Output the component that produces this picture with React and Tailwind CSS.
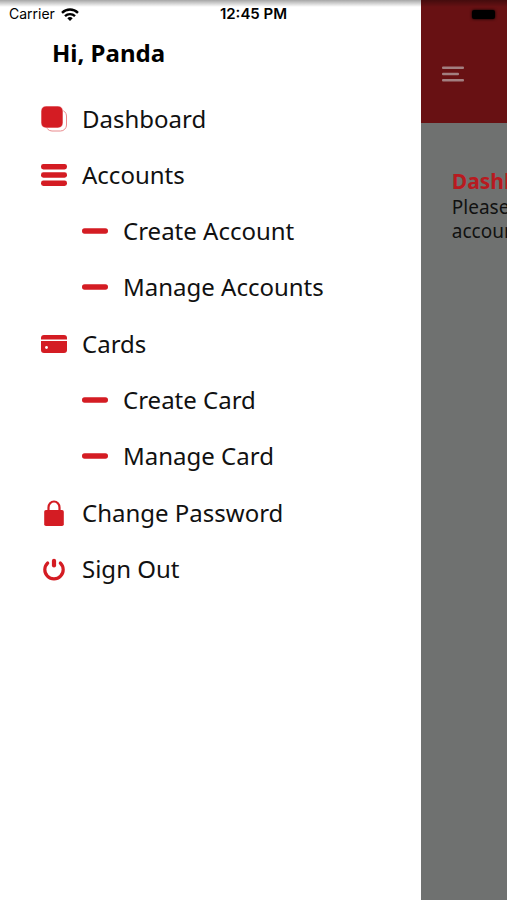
const DashboardIcon = () => (
    <svg viewBox="0 0 26 26" className="h-[26px] w-[26px]" aria-hidden="true">
        <rect x="5" y="4" width="20.5" height="21" rx="6" fill="#fff" stroke="#e98a8d" strokeWidth="1" />
        <rect x="0" y="0" width="22" height="22" rx="5" fill="#d41c23" stroke="#fff" strokeWidth="0.6" />
    </svg>
)

const AccountsIcon = () => (
    <svg viewBox="0 0 26 26" className="h-[26px] w-[26px]" fill="#d41c23" aria-hidden="true">
        <rect x="0" y="2" width="26" height="5.4" rx="2.4" />
        <rect x="0" y="10.3" width="26" height="5.4" rx="2.4" />
        <rect x="0" y="18.6" width="26" height="5.4" rx="2.4" />
    </svg>
)

const DashIcon = () => (
    <svg viewBox="0 0 26 26" className="h-[26px] w-[26px]" fill="#d41c23" aria-hidden="true">
        <rect x="0" y="10.3" width="26" height="5.4" rx="2.6" />
    </svg>
)

const CardIcon = () => (
    <svg viewBox="0 0 26 26" className="h-[26px] w-[26px]" fill="#d41c23" aria-hidden="true">
        <path d="M3 4h20a3 3 0 0 1 3 3v1.500H0V7a3 3 0 0 1 3-3z" />
        <path d="M0 10h26v9a3 3 0 0 1-3 3H3a3 3 0 0 1-3-3z" />
        <circle cx="5.5" cy="16.5" r="1.4" fill="#fff" />
    </svg>
)

const LockIcon = () => (
    <svg viewBox="0 0 26 26" className="h-[26px] w-[26px]" aria-hidden="true">
        <path d="M7.500 11V7.500a5.500 6 0 0 1 11 0V11" fill="none" stroke="#d41c23" strokeWidth="2.2" />
        <rect x="3.2" y="10" width="19.6" height="16" rx="1.8" fill="#d41c23" />
    </svg>
)

const PowerIcon = () => (
    <svg viewBox="0 0 26 26" className="h-[26px] w-[26px]" fill="none" stroke="#d41c23" aria-hidden="true">
        <path d="M6.700 7a9.200 9.200 0 1 0 12.600 0" strokeWidth="3.2" strokeLinecap="round" />
        <path d="M13 4.800v4.600" strokeWidth="4.2" strokeLinecap="round" />
    </svg>
)

const WifiIcon = () => (
    <svg viewBox="0 0 18 13" className="h-[13px] w-[18px]" fill="none" stroke="#000" strokeWidth="2.4" aria-hidden="true">
        <path d="M1 4.800a11.500 11.500 0 0 1 16 0" />
        <path d="M4 8.100a7.200 7.200 0 0 1 10 0" />
        <path d="M9 13L6.300 10.300a3.900 3.900 0 0 1 5.400 0z" fill="#000" stroke="none" />
    </svg>
)

const menu = [
    { label: "Dashboard", icon: DashboardIcon },
    { label: "Accounts", icon: AccountsIcon, children: ["Create Account", "Manage Accounts"] },
    { label: "Cards", icon: CardIcon, children: ["Create Card", "Manage Card"] },
    { label: "Change Password", icon: LockIcon },
    { label: "Sign Out", icon: PowerIcon },
]

const MenuLink = ({ icon: Icon, label }) => (
    <a href="#" className="flex h-14 items-center gap-[15px] text-2xl whitespace-nowrap text-[#111]">
        <Icon />
        {label}
    </a>
)

const StatusBar = () => (
    <div className="absolute inset-x-0 top-0 z-10 grid h-7 grid-cols-3 items-center bg-linear-to-b from-black/35 from-0% to-transparent to-25% px-[9px] font-['Inter',sans-serif] text-sm text-black">
        <div className="flex items-center gap-1.5">
            Carrier
            <WifiIcon />
        </div>
        <span className="text-center text-[15px] font-semibold">12:45 PM</span>
        <span className="mr-[3px] h-[9px] w-[23px] justify-self-end rounded-xs bg-black shadow-[0_0_3px_#000]"></span>
    </div>
)

const App = () => {
    return (
        <div className="relative flex min-h-screen overflow-hidden bg-white font-['Noto_Sans','Open_Sans',sans-serif]">
            <StatusBar />

            {/* Drawer */}
            <nav className="w-[83%] shrink-0 bg-white pt-[35px] pl-[41px]">
                <h1 className="pl-[11px] text-2xl leading-9 font-bold text-black">Hi, Panda</h1>
                <ul className="pt-5">
                    {menu.map((item) => (
                        <li key={item.label}>
                            <MenuLink icon={item.icon} label={item.label} />
                            {item.children && (
                                <ul className="pb-px pl-[41px]">
                                    {item.children.map((child) => (
                                        <li key={child}>
                                            <MenuLink icon={DashIcon} label={child} />
                                        </li>
                                    ))}
                                </ul>
                            )}
                        </li>
                    ))}
                </ul>
            </nav>

            {/* Dimmed page pushed aside by the drawer */}
            <main className="min-w-0 flex-1 overflow-hidden bg-[#6f7170]">
                <header className="flex h-[123px] items-center bg-[#681113] pt-[25px] pl-[21px]">
                    <button type="button" aria-label="Close menu">
                        <svg viewBox="0 0 22 16" className="h-4 w-[22px]" fill="#a27f80" aria-hidden="true">
                            <rect x="0" y="0.5" width="22" height="2.6" rx="1" />
                            <rect x="0" y="6.7" width="17" height="2.6" rx="1" />
                            <rect x="0" y="12.9" width="22" height="2.6" rx="1" />
                        </svg>
                    </button>
                </header>
                <section className="pt-11 pl-[31px] whitespace-nowrap">
                    <h2 className="text-[21px] leading-7 font-bold text-[#b81a20]">Dashboard</h2>
                    <p className="text-[19px] leading-6 text-[#111]">
                        Please select
                        <br />
                        account
                    </p>
                </section>
            </main>
        </div>
    )
}

export default App
